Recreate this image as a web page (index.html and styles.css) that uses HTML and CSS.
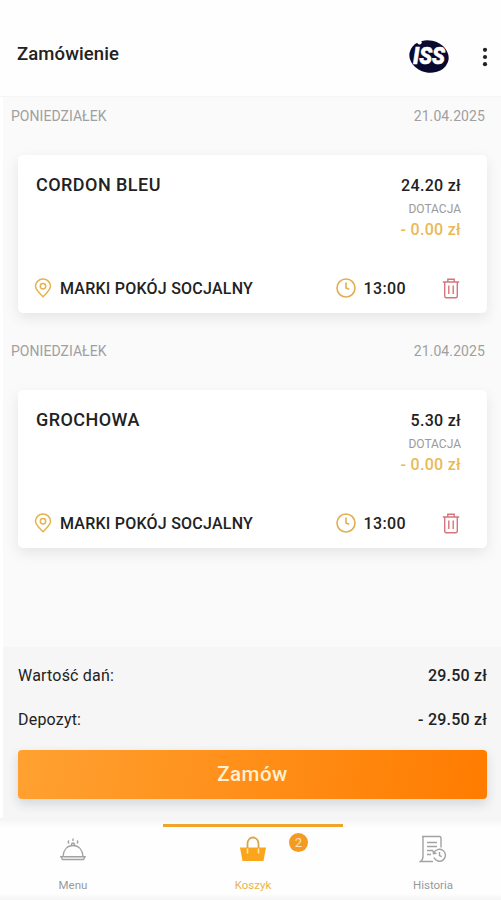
FILE: index.html
```
<!DOCTYPE html>
<html lang="pl">
<head>
<meta charset="utf-8">
<title>Zamówienie</title>
<link rel="stylesheet" href="styles.css">
</head>
<body>
<svg class="defs" width="0" height="0" aria-hidden="true">
  <symbol id="pin" viewBox="0 0 18 20"><path d="M9 18.700C6 15.500 1.500 12 1.500 8.300a7.500 7.300 0 0 1 15 0C16.500 12 12 15.500 9 18.700Z"/><circle cx="9" cy="8.300" r="2.700"/></symbol>
  <symbol id="clock" viewBox="0 0 20 20"><circle cx="10" cy="10" r="9"/><path d="M10 4.500V10l3.200 1.300"/></symbol>
  <symbol id="trash" viewBox="0 0 18 21"><path d="M.8 4h16.400M5.800 3.700V1.200h6.400v2.500M2.700 4v14q0 1.800 1.700 1.800h9.200q1.700 0 1.700-1.800V4M6.800 7.500v8.500M11.200 7.500v8.500"/></symbol>
</svg>
<div class="app">
  <header class="header">
    <h1 class="title">Zamówienie</h1>
    <svg class="logo" width="42" height="36" viewBox="0 0 42 36"><ellipse cx="21" cy="18.500" rx="19.800" ry="16" transform="rotate(12 21 18.500)"/><circle class="logo-dot" cx="11.500" cy="4.200" r="2.200"/><text x="5" y="25.500" textLength="32" lengthAdjust="spacingAndGlyphs">ISS</text></svg>
    <svg class="more" width="6" height="20" viewBox="0 0 6 20"><circle cx="3" cy="2.800" r="2.100"/><circle cx="3" cy="10" r="2.100"/><circle cx="3" cy="17.200" r="2.100"/></svg>
  </header>
  <main class="orders">
    <section class="day">
      <div class="day-head"><span class="weekday">PONIEDZIAŁEK</span><span class="date">21.04.2025</span></div>
      <article class="card">
        <div class="card-top">
          <h2 class="dish">CORDON BLEU</h2>
          <div class="prices"><span class="price">24.20 zł</span><span class="grant">DOTACJA</span><span class="discount">- 0.00 zł</span></div>
        </div>
        <div class="card-bottom">
          <svg class="pin"><use href="#pin"/></svg><span class="place">MARKI POKÓJ SOCJALNY</span>
          <svg class="clock"><use href="#clock"/></svg><span class="time">13:00</span>
          <svg class="trash"><use href="#trash"/></svg>
        </div>
      </article>
    </section>
    <section class="day">
      <div class="day-head"><span class="weekday">PONIEDZIAŁEK</span><span class="date">21.04.2025</span></div>
      <article class="card">
        <div class="card-top">
          <h2 class="dish">GROCHOWA</h2>
          <div class="prices"><span class="price">5.30 zł</span><span class="grant">DOTACJA</span><span class="discount">- 0.00 zł</span></div>
        </div>
        <div class="card-bottom">
          <svg class="pin"><use href="#pin"/></svg><span class="place">MARKI POKÓJ SOCJALNY</span>
          <svg class="clock"><use href="#clock"/></svg><span class="time">13:00</span>
          <svg class="trash"><use href="#trash"/></svg>
        </div>
      </article>
    </section>
  </main>
  <section class="summary">
    <div class="sum-row"><span class="sum-label">Wartość dań:</span><span class="sum-value">29.50 zł</span></div>
    <div class="sum-row"><span class="sum-label">Depozyt:</span><span class="sum-value">- 29.50 zł</span></div>
    <button class="order">Zamów</button>
  </section>
  <nav class="nav">
    <a class="tab">
      <svg class="tab-icon" width="28" height="30" viewBox="0 0 28 30"><path d="M4 21.500C4.500 14.500 8.500 10.500 14 10.500S23.500 14.500 24 21.500M2 21.800h24l-1.500 2.700h-21ZM12.500 10q0-2 1.500-2t1.500 2M10 8.500q-1.500-1.500 0-3M14 6V3.500M18 8.500q1.500-1.500 0-3"/></svg>
      <span class="tab-label">Menu</span>
    </a>
    <a class="tab active">
      <svg class="tab-icon" width="28" height="30" viewBox="0 0 28 30"><path class="basket" d="M1 12.500h26l-2.500 13.500h-21Z"/><path class="handle" d="M8.500 13V8.500a5.500 6 0 0 1 11 0V13"/><path class="strap" d="M8.500 13.500v5M19.500 13.500v5"/></svg>
      <span class="badge">2</span>
      <span class="tab-label">Koszyk</span>
    </a>
    <a class="tab">
      <svg class="tab-icon" width="28" height="30" viewBox="0 0 28 30"><path d="M14 26.500H1.500q2.500-1.500 2.500-5V3q0-1.500-1-1.500h17.500q1.500 0 1.500 2v9M8 7.500h10M8 11.500h10M8 15.500h6M8 19.500h4M14.700 18.500a6 6 0 1 1 .2 4M14 15.500l.5 3.200 3-.5M20.500 17v3.500l2.200 1.200"/></svg>
      <span class="tab-label">Historia</span>
    </a>
  </nav>
</div>
</body>
</html>
```
FILE: styles.css
```
* { box-sizing: border-box; }
body { margin: 0; background: #fff; font-family: Roboto, "Liberation Sans", sans-serif; color: #222; }
.defs { position: absolute; }
.app { width: 501px; height: 900px; display: flex; flex-direction: column; overflow: hidden; }
svg { fill: none; flex: none; }
h1, h2 { margin: 0; font-weight: 500; }

.header { flex: none; height: 97px; display: flex; align-items: center; padding: 16px 13px 0 17px; background: #fefefe; border-bottom: 1px solid #f5f5f5; }
.title { font-size: 18.5px; line-height: 24px; letter-spacing: .1px; margin: 0 auto 5px 0; }
.logo { margin-right: 32px; fill: #09092f; }
.logo-dot { fill: #fff; }
.logo text { fill: #fff; font: italic 900 23px Roboto, sans-serif; stroke: #fff; stroke-width: .6px; }
.more { fill: #222; margin-top: 2px; }

.orders { flex: 1; margin-left: 3px; background: #fafafa; }
.day { height: 235px; }
.day-head { height: 58px; padding: 9px 16px 0 8px; display: flex; justify-content: space-between; font-size: 14px; line-height: 20px; color: #a0a0a0; }
.weekday { letter-spacing: .04px; }
.date { letter-spacing: .1px; }
.card { width: 469px; height: 158px; margin-left: 15px; padding: 19px 26px 0 18px; display: flex; flex-direction: column; background: #fff; border-radius: 5px; box-shadow: 0 5px 14px rgba(0, 0, 0, .085); }
.card-top { height: 100px; display: flex; justify-content: space-between; }
.dish { font-size: 18px; line-height: 22px; letter-spacing: .45px; }
.prices { display: flex; flex-direction: column; align-items: flex-end; }
.price { font-weight: 500; font-size: 16px; line-height: 23px; letter-spacing: .3px; }
.grant { font-size: 12px; line-height: 24px; color: #9a9a9a; }
.discount { font-weight: 500; font-size: 16px; line-height: 18px; letter-spacing: .3px; color: #e9b957; }
.card-bottom { height: 28px; display: flex; align-items: center; }
.pin { width: 18px; height: 20px; margin-left: -2px; stroke: #e5b34d; stroke-width: 1.5px; }
.place { margin-left: 8px; margin-right: auto; font-weight: 500; font-size: 16px; letter-spacing: .23px; }
.clock { width: 20px; height: 20px; stroke: #e2ad50; stroke-width: 1.6px; }
.time { margin: 0 36px 0 7px; font-weight: 500; font-size: 16px; letter-spacing: .4px; }
.trash { width: 18px; height: 21px; margin-right: 1px; stroke: #d5747d; stroke-width: 1.4px; }

.summary { flex: none; height: 171px; margin-left: 3px; padding: 6px 14px 0 15px; background: #f6f6f6; }
.sum-row { height: 44px; display: flex; align-items: center; justify-content: space-between; font-size: 16px; }
.sum-label { letter-spacing: .2px; }
.sum-value { font-weight: 500; letter-spacing: .2px; }
.order { display: block; width: 469px; height: 49px; margin-top: 9px; padding: 0; border: 0; border-radius: 4px; background: linear-gradient(100deg, #ffa131, #ff7c00); box-shadow: 0 5px 11px rgba(40, 50, 70, .16); color: #fff1d2; font: 500 20.5px/49px Roboto, sans-serif; letter-spacing: .5px; text-align: center; }

.nav { flex: none; height: 82px; padding-left: 5px; display: grid; grid-template-columns: repeat(3, 180px); justify-content: center; background: linear-gradient(#f4f4f4, #fefefe 9px, #fefefe 76px, #f4f4f4); }
.tab { position: relative; display: flex; flex-direction: column; align-items: center; margin-top: 6px; border-top: 3px solid transparent; color: #999; }
.active { border-color: #f0a429; color: #e9b44e; }
.tab-icon { margin-top: 8px; stroke: #a2a2a2; stroke-width: 1.4px; }
.tab-label { margin-top: 13px; font-size: 11.5px; line-height: 14px; }
.tab-icon .basket { fill: #faa51b; stroke: none; }
.tab-icon .handle { stroke: #d9a54b; stroke-width: 1.8px; }
.tab-icon .strap { stroke: #ffe3a6; stroke-width: 1.6px; }
.badge { position: absolute; left: 126px; top: 6px; width: 19px; height: 19px; border-radius: 50%; background: #f39a25; color: #ffe5bd; font-size: 13px; line-height: 19px; text-align: center; }
```
